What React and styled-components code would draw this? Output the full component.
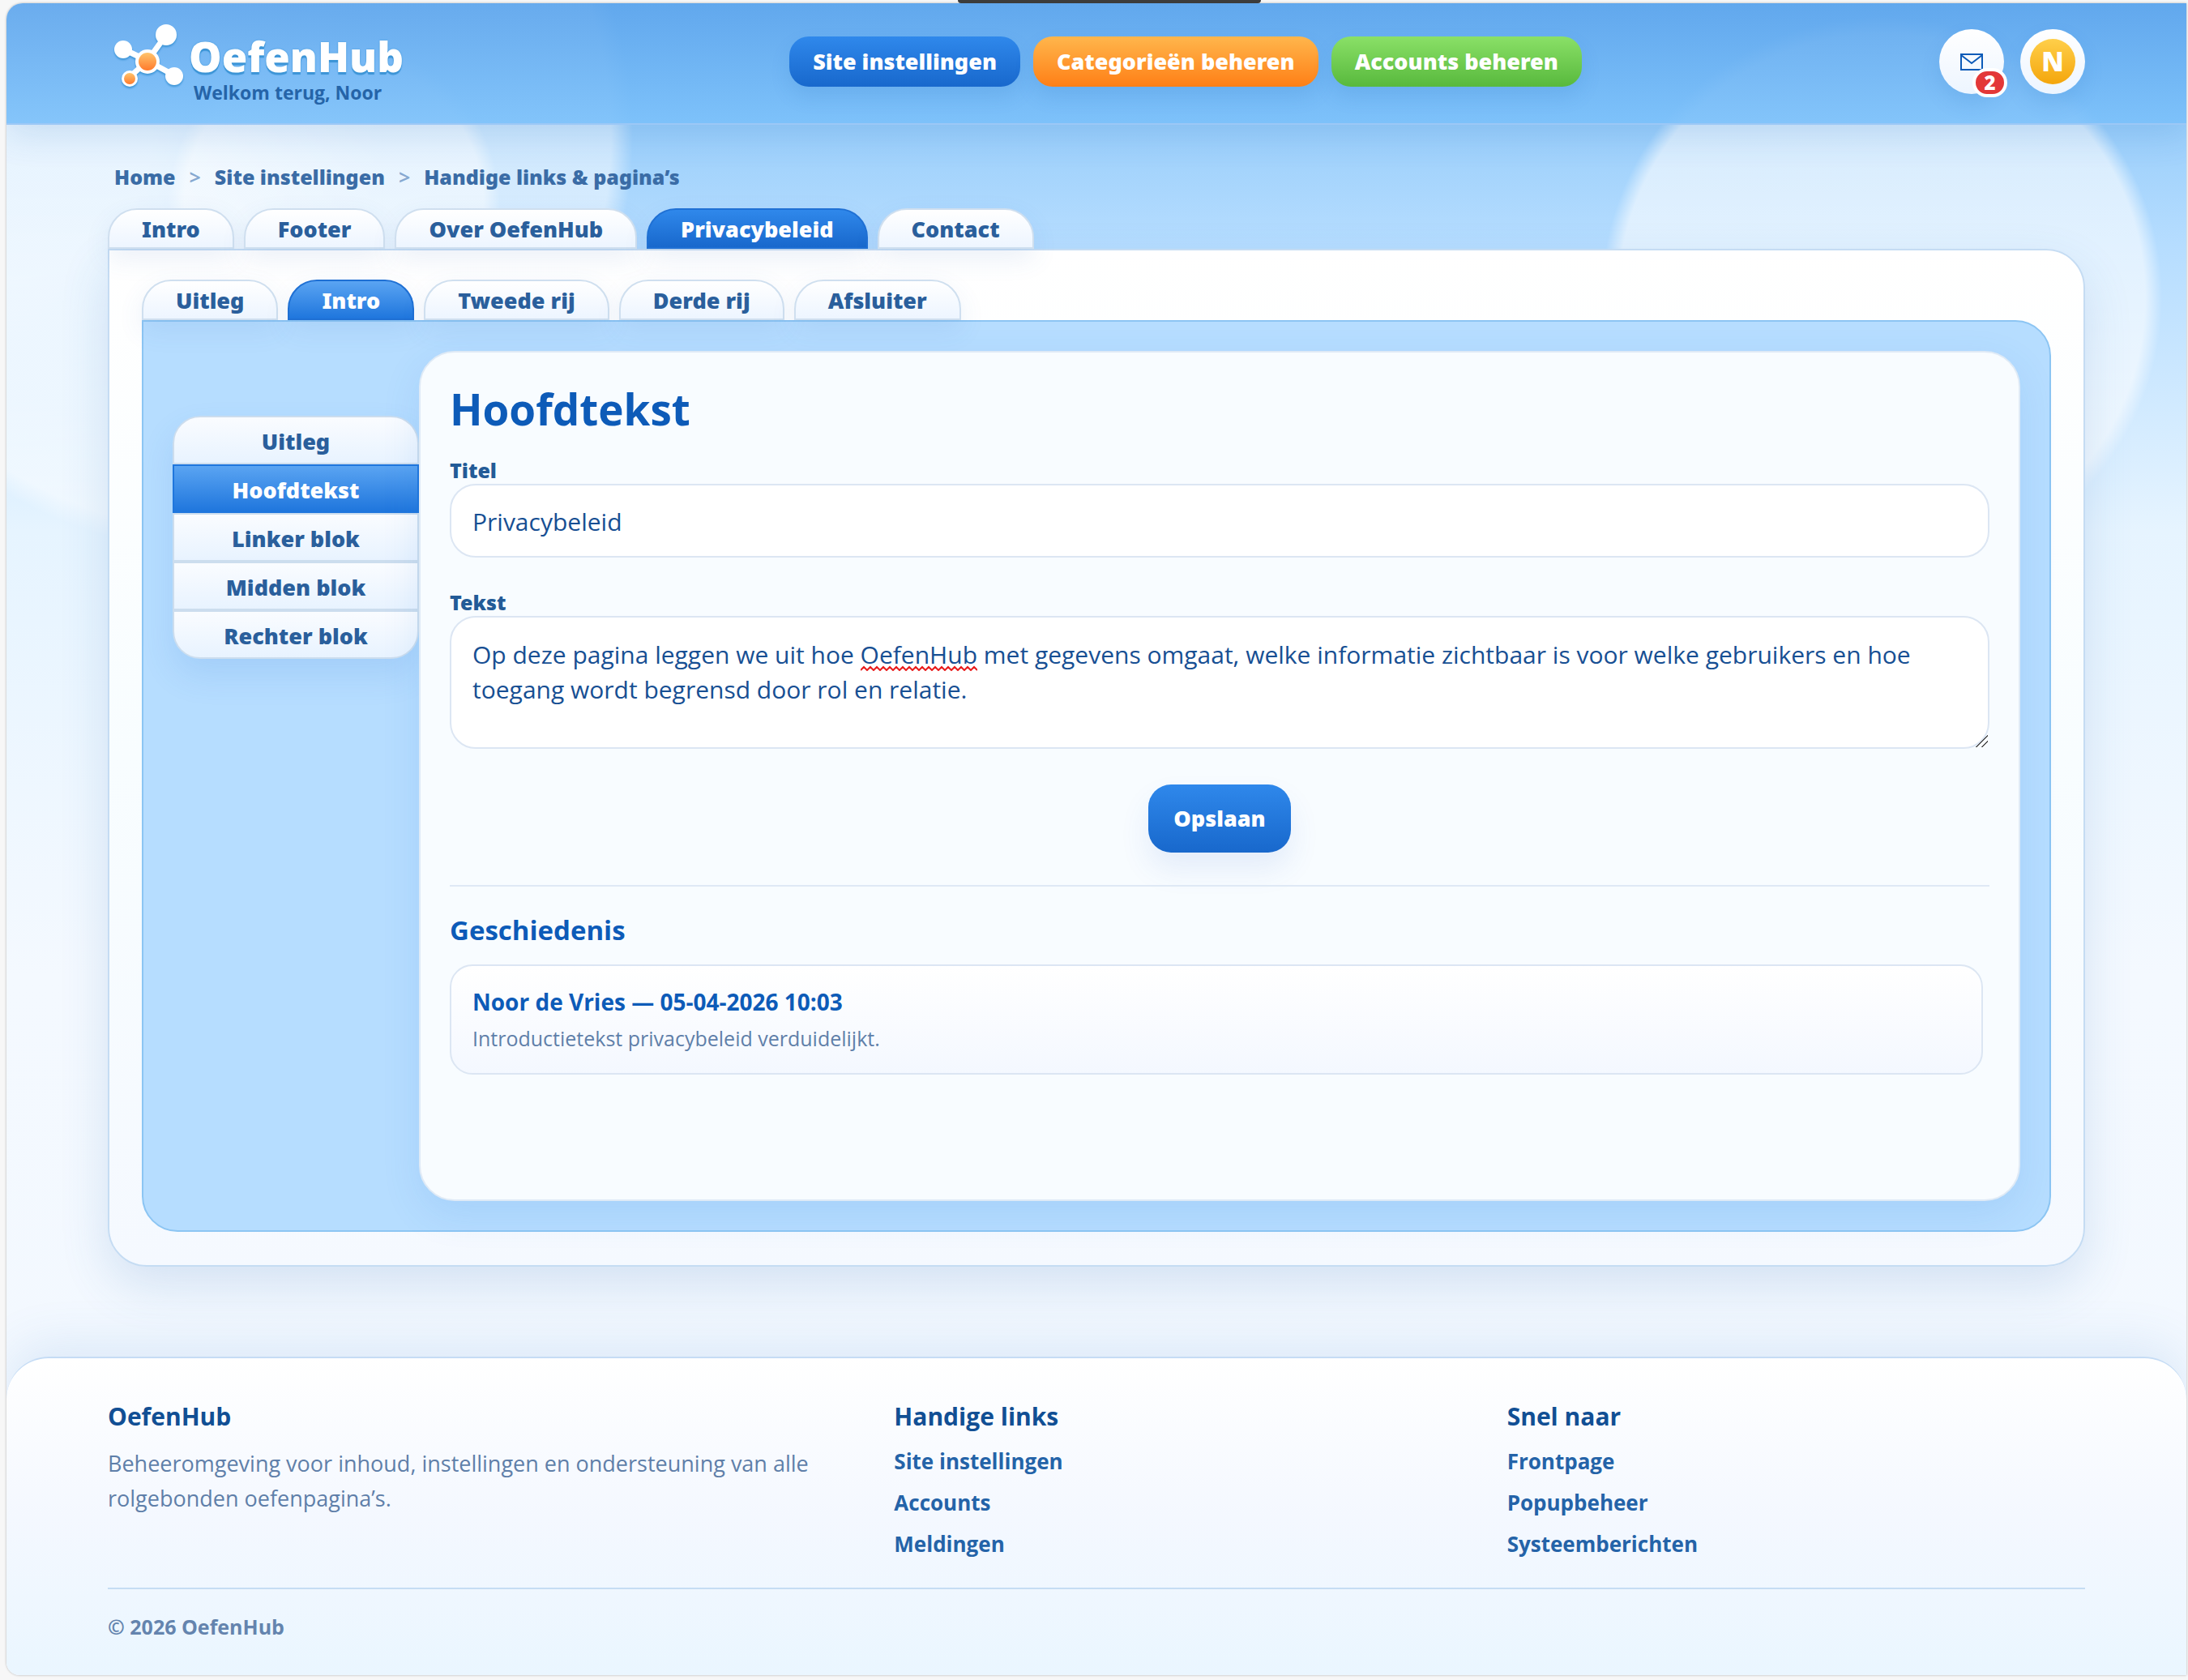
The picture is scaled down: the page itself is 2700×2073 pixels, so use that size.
import React from 'react';
import styled, { createGlobalStyle } from 'styled-components';

const GlobalStyle = createGlobalStyle`
  :root {
    --black-font: 'Noto Sans', 'Open Sans', sans-serif;
  }
  * {
    box-sizing: border-box;
  }
  body {
    margin: 0;
    padding: 4px 2px 7px 8px;
    background: #f7f7f7;
    font-family: 'Open Sans', 'Noto Sans', sans-serif;
    color: #174f93;
  }
  h1, h2, h3, p {
    margin: 0;
  }
  a {
    color: inherit;
    text-decoration: none;
  }
  button, input, textarea {
    font-family: inherit;
  }
`;

const Notch = styled.div`
  position: absolute;
  top: 0;
  left: 50%;
  width: 374px;
  height: 4px;
  margin-left: -168px;
  border-radius: 0 0 8px 8px;
  background: #3c3c3c;
`;
const Page = styled.div`
  border-radius: 20px 0 0 16px;
  overflow: hidden;
  box-shadow: 0 0 3px rgba(0, 0, 0, 0.3);
  background:
    radial-gradient(circle at 404px 250px, rgba(255, 255, 255, 0.5) 0 185px, transparent 205px),
    radial-gradient(circle at 261px 165px, rgba(255, 255, 255, 0.5) 0 485px, transparent 512px),
    radial-gradient(circle at 0 160px, rgba(255, 255, 255, 0.5) 0 180px, transparent 460px),
    radial-gradient(circle at calc(100% - 376px) 363px, rgba(255, 255, 255, 0.6) 0 325px, transparent 346px),
    linear-gradient(180deg, #7fc0f6 0, #b6ddff 300px, #e6f4ff 650px, #f4f9ff 1200px, #f2f8ff 100%);
`;
const Header = styled.header`
  display: flex;
  justify-content: space-between;
  align-items: center;
  height: 150px;
  padding: 0 125px 4px;
  border-bottom: 2px solid #9cc8f6;
  background: linear-gradient(180deg, rgba(94, 165, 236, 0.9), rgba(122, 192, 250, 0.9));
  box-shadow: 0 12px 40px rgba(40, 110, 190, 0.16);
`;
const Brand = styled.a`
  display: flex;
  gap: 5px;
  min-width: 400px;
  padding-left: 7px;
`;
const LogoMark = styled.svg`
  width: 88px;
  height: 88px;
  filter: drop-shadow(0 2px 1px #3b94d6);
`;
const BrandName = styled.div`
  padding-top: 13px;
  font-size: 51px;
  line-height: 62px;
  font-weight: 800;
  color: #fff;
  text-shadow: 0 3px 1px #3b94d6, 0 0 2px #3b94d6;
`;
const Welcome = styled.div`
  padding-left: 6px;
  font-size: 23px;
  line-height: 28px;
  font-weight: 700;
  color: #2564a8;
`;
const Nav = styled.nav`
  display: flex;
  gap: 16px;
`;
const navColors = {
  blue: 'linear-gradient(180deg, #2f88eb, #1868cc)',
  orange: 'linear-gradient(180deg, #ffb64c, #ff7f16)',
  green: 'linear-gradient(180deg, #8ae067, #58b93d)',
};
const NavLink = styled.a`
  padding: 0 29px;
  border-radius: 24px;
  font-family: var(--black-font);
  font-size: 27px;
  line-height: 62px;
  font-weight: 900;
  color: #fff;
  background: ${({ $color }) => navColors[$color]};
  box-shadow: 0 12px 24px rgba(40, 110, 190, 0.14);
`;
const Actions = styled.div`
  display: flex;
  justify-content: flex-end;
  gap: 20px;
`;
const RoundButton = styled.button`
  position: relative;
  display: flex;
  align-items: center;
  justify-content: center;
  width: 80px;
  height: 80px;
  padding: 0;
  border: 0;
  border-radius: 50%;
  background: linear-gradient(180deg, #fff, #edf5ff);
  box-shadow: 0 12px 24px rgba(40, 110, 190, 0.14);
`;
const Badge = styled.span`
  position: absolute;
  right: -4px;
  bottom: -4px;
  min-width: 43px;
  border: 4px solid #fff;
  border-radius: 18px;
  background: #e33838;
  color: #fff;
  font-family: var(--black-font);
  font-size: 24px;
  line-height: 28px;
  font-weight: 900;
  text-align: center;
`;
const Avatar = styled.span`
  width: 56px;
  border-radius: 50%;
  background: linear-gradient(180deg, #ffcf4a, #f4a60c);
  color: #fff;
  font-family: var(--black-font);
  font-size: 33px;
  line-height: 56px;
  font-weight: 900;
`;
const Main = styled.main`
  padding: 46px 125px 111px;
`;
const Breadcrumb = styled.nav`
  display: flex;
  gap: 17px;
  padding-left: 8px;
  margin-bottom: 21px;
  font-family: var(--black-font);
  font-size: 25px;
  line-height: 36px;
  font-weight: 900;
  color: #3a6ca6;
`;
const Separator = styled.span`
  font-weight: 600;
  color: #86a8d0;
`;
const Tabs = styled.div`
  display: flex;
  gap: 12px;
`;
const activeTabs = {
  main: 'linear-gradient(180deg, #2f88eb, #1868cc)',
  sub: 'linear-gradient(180deg, #5aa4f2, #1f76dd)',
};
const Tab = styled.button`
  height: 50px;
  padding: 2px 40px 0;
  border: 2px solid ${({ $active }) => ($active ? '#1f70d4' : '#cfdfef')};
  border-radius: 36px 36px 0 0;
  background: ${({ $active, $kind }) =>
    $active ? activeTabs[$kind] : 'linear-gradient(180deg, #fff, #edf5ff)'};
  color: ${({ $active }) => ($active ? '#fff' : '#2a5f9c')};
  font-family: var(--black-font);
  font-size: 27px;
  line-height: 44px;
  font-weight: 900;
  box-shadow: 0 12px 32px rgba(60, 110, 190, 0.1);
`;
const Panel = styled.section`
  padding: 36px 40px 41px;
  border: 2px solid #c5dcf3;
  border-radius: 0 48px 48px 48px;
  background: linear-gradient(180deg, #fff, #f8fdff 50%, #f5f9ff);
  box-shadow: 0 24px 60px rgba(50, 110, 180, 0.16);
`;
const BluePanel = styled.div`
  display: flex;
  padding: 36px;
  border: 2px solid #8cc5f3;
  border-radius: 0 44px 44px 44px;
  background: #b6ddff;
`;
const SideNav = styled.div`
  display: flex;
  flex-direction: column;
  align-self: flex-start;
  width: 304px;
  margin-top: 80px;
  border-radius: 34px;
  overflow: hidden;
  box-shadow: 0 20px 40px rgba(50, 120, 210, 0.14);
`;
const SideButton = styled.button`
  height: 60px;
  padding: 2px 0 0;
  border: 2px solid ${({ $active }) => ($active ? '#1f76dd' : '#ccddee')};
  background: ${({ $active }) =>
    $active ? 'linear-gradient(180deg, #5aa4f2, #1f76dd)' : 'linear-gradient(180deg, #fafcff, #e8f3ff)'};
  color: ${({ $active }) => ($active ? '#fff' : '#2a5f9c')};
  font-family: var(--black-font);
  font-size: 27px;
  font-weight: 900;
  &:first-child {
    border-radius: 34px 34px 0 0;
  }
  &:last-child {
    border-radius: 0 0 34px 34px;
  }
`;
const Card = styled.div`
  flex: 1;
  min-height: 1049px;
  padding: 34px 36px;
  border: 2px solid #dfeaf6;
  border-radius: 44px;
  background: #f8fcff;
  box-shadow: 0 16px 48px rgba(50, 120, 210, 0.12);
`;
const Title = styled.h1`
  font-size: 53px;
  line-height: 72px;
  font-weight: 700;
  color: #0d5bb8;
`;
const Field = styled.div`
  position: relative;
  display: flex;
  flex-direction: column;
  margin-top: 22px;
  & + & {
    margin-top: 38px;
  }
`;
const Label = styled.label`
  font-family: var(--black-font);
  font-size: 25px;
  line-height: 34px;
  font-weight: 900;
  color: #235b97;
`;
const Input = styled.input`
  height: 91px;
  padding: 2px 26px 0;
  border: 2px solid #dce6f3;
  border-radius: 32px;
  background: #fff;
  color: #174f93;
  font-size: 30px;
`;
const TextArea = styled.textarea`
  height: 164px;
  padding: 24px 26px;
  border: 2px solid #dce6f3;
  border-radius: 32px;
  background: #fff;
  color: #174f93;
  font-size: 30px;
  line-height: 43px;
  resize: vertical;
  &::-webkit-resizer {
    background: linear-gradient(
      135deg,
      transparent 0 48%,
      #555 48% 55%,
      transparent 55% 72%,
      #555 72% 79%,
      transparent 79%
    );
  }
`;
const Squiggle = styled.svg`
  position: absolute;
  left: 507px;
  top: 95px;
  width: 144px;
  height: 7px;
  pointer-events: none;
`;
const SaveButton = styled.button`
  display: block;
  margin: 44px auto 40px;
  padding: 0 31px;
  border: 0;
  border-radius: 28px;
  background: ${navColors.blue};
  color: #fff;
  font-family: var(--black-font);
  font-size: 27px;
  line-height: 84px;
  font-weight: 900;
  box-shadow: 0 20px 36px rgba(50, 100, 210, 0.1);
`;
const History = styled.section`
  padding-top: 29px;
  border-top: 2px solid #dfe9f5;
`;
const HistoryTitle = styled.h2`
  font-size: 33px;
  line-height: 50px;
  font-weight: 700;
  color: #0d5bb8;
`;
const HistoryItem = styled.article`
  margin: 17px 8px 0 0;
  padding: 22px 26px 21px;
  border: 2px solid #dce6f3;
  border-radius: 28px;
  background: linear-gradient(180deg, #fff, #f4f8ff);
`;
const HistoryName = styled.h3`
  font-size: 28px;
  line-height: 44px;
  font-weight: 700;
  color: #0d5bb8;
`;
const HistoryText = styled.p`
  padding-top: 2px;
  font-size: 25px;
  line-height: 43px;
  color: #5f7fa9;
`;
const FooterComponent = styled.footer`
  padding: 50px 125px 38px;
  border-top: 2px solid #c5dcf5;
  border-radius: 52px 52px 0 0;
  background: linear-gradient(180deg, #fff, #f4f8ff 50%, #eaf6ff);
  box-shadow: 0 -16px 60px rgba(60, 120, 200, 0.12);
`;
const FooterGrid = styled.div`
  display: grid;
  grid-template-columns: 13fr 10fr 10fr;
  column-gap: 43px;
  padding-bottom: 28px;
  border-bottom: 2px solid #c5ddf3;
`;
const FooterColumn = styled.div`
  display: flex;
  flex-direction: column;
  align-items: flex-start;
`;
const FooterTitle = styled.h3`
  margin-bottom: 8px;
  font-size: 30px;
  line-height: 44px;
  font-weight: 700;
  color: #114f94;
`;
const FooterText = styled.p`
  max-width: 880px;
  padding-top: 6px;
  font-size: 27px;
  line-height: 43px;
  color: #5f7fa9;
`;
const FooterLink = styled.a`
  font-size: 26px;
  line-height: 51px;
  font-weight: 700;
  color: #2463a8;
`;
const Copyright = styled.p`
  padding-top: 24px;
  font-size: 25px;
  line-height: 44px;
  font-weight: 700;
  color: #6484ae;
`;

const tabs = ['Intro', 'Footer', 'Over OefenHub', 'Privacybeleid', 'Contact'];
const subTabs = ['Uitleg', 'Intro', 'Tweede rij', 'Derde rij', 'Afsluiter'];
const blocks = ['Uitleg', 'Hoofdtekst', 'Linker blok', 'Midden blok', 'Rechter blok'];

const Logo = () => (
  <LogoMark viewBox="0 -3 88 88" aria-hidden="true">
    <defs>
      <linearGradient id="orange" x1="0" y1="0" x2="0" y2="1">
        <stop offset="0" stopColor="#ffc46c" />
        <stop offset="1" stopColor="#ff7a2c" />
      </linearGradient>
    </defs>
    <path d="M65 15 42 47 11 32M42 47 75 65M42 47 19 68" fill="none" stroke="#fff" strokeWidth="7" />
    <g fill="#fff">
      <circle cx="65" cy="15" r="13" />
      <circle cx="12" cy="33" r="11" />
      <circle cx="42" cy="48" r="15" />
      <circle cx="75" cy="66" r="11" />
      <circle cx="20" cy="69" r="10" />
    </g>
    <circle cx="42" cy="48" r="11" fill="url(#orange)" />
    <circle cx="20" cy="69" r="7" fill="url(#orange)" />
  </LogoMark>
);

const App = () => {
  return (
    <>
      <GlobalStyle />
      <Notch />
      <Page>
        <Header>
          <Brand href="/">
            <Logo />
            <div>
              <BrandName>OefenHub</BrandName>
              <Welcome>Welkom terug, Noor</Welcome>
            </div>
          </Brand>
          <Nav>
            <NavLink href="#site" $color="blue">Site instellingen</NavLink>
            <NavLink href="#categorieen" $color="orange">Categorieën beheren</NavLink>
            <NavLink href="#accounts" $color="green">Accounts beheren</NavLink>
          </Nav>
          <Actions>
            <RoundButton type="button" aria-label="Berichten">
              <svg width="28" height="22" viewBox="0 0 28 22" fill="none" stroke="#0d5bb8" strokeWidth="2">
                <path d="M1 2h26v19H1zM1 3l13 10L27 3" />
              </svg>
              <Badge>2</Badge>
            </RoundButton>
            <RoundButton type="button">
              <Avatar>N</Avatar>
            </RoundButton>
          </Actions>
        </Header>
        <Main>
          <Breadcrumb>
            <a href="/">Home</a>
            <Separator>&gt;</Separator>
            <a href="#site">Site instellingen</a>
            <Separator>&gt;</Separator>
            <a href="#links">Handige links &amp; pagina’s</a>
          </Breadcrumb>
          <Tabs>
            {tabs.map((tab) => (
              <Tab key={tab} type="button" $kind="main" $active={tab === 'Privacybeleid'}>
                {tab}
              </Tab>
            ))}
          </Tabs>
          <Panel>
            <Tabs>
              {subTabs.map((tab) => (
                <Tab key={tab} type="button" $kind="sub" $active={tab === 'Intro'}>
                  {tab}
                </Tab>
              ))}
            </Tabs>
            <BluePanel>
              <SideNav>
                {blocks.map((block) => (
                  <SideButton key={block} type="button" $active={block === 'Hoofdtekst'}>
                    {block}
                  </SideButton>
                ))}
              </SideNav>
              <Card>
                <Title>Hoofdtekst</Title>
                <Field>
                  <Label htmlFor="titel">Titel</Label>
                  <Input id="titel" type="text" defaultValue="Privacybeleid" />
                </Field>
                <Field>
                  <Label htmlFor="tekst">Tekst</Label>
                  <TextArea
                    id="tekst"
                    spellCheck={false}
                    defaultValue="Op deze pagina leggen we uit hoe OefenHub met gegevens omgaat, welke informatie zichtbaar is voor welke gebruikers en hoe toegang wordt begrensd door rol en relatie."
                  />
                  <Squiggle viewBox="0 0 144 7" aria-hidden="true">
                    <path
                      d={`M0 6${'l4 -4l4 4'.repeat(18)}`}
                      fill="none"
                      stroke="#e81c1c"
                      strokeWidth="2"
                    />
                  </Squiggle>
                </Field>
                <SaveButton type="button">Opslaan</SaveButton>
                <History>
                  <HistoryTitle>Geschiedenis</HistoryTitle>
                  <HistoryItem>
                    <HistoryName>Noor de Vries — 05-04-2026 10:03</HistoryName>
                    <HistoryText>Introductietekst privacybeleid verduidelijkt.</HistoryText>
                  </HistoryItem>
                </History>
              </Card>
            </BluePanel>
          </Panel>
        </Main>
        <FooterComponent>
          <FooterGrid>
            <FooterColumn>
              <FooterTitle>OefenHub</FooterTitle>
              <FooterText>
                Beheeromgeving voor inhoud, instellingen en ondersteuning van alle rolgebonden oefenpagina’s.
              </FooterText>
            </FooterColumn>
            <FooterColumn>
              <FooterTitle>Handige links</FooterTitle>
              <FooterLink href="#site">Site instellingen</FooterLink>
              <FooterLink href="#accounts">Accounts</FooterLink>
              <FooterLink href="#meldingen">Meldingen</FooterLink>
            </FooterColumn>
            <FooterColumn>
              <FooterTitle>Snel naar</FooterTitle>
              <FooterLink href="#frontpage">Frontpage</FooterLink>
              <FooterLink href="#popupbeheer">Popupbeheer</FooterLink>
              <FooterLink href="#systeemberichten">Systeemberichten</FooterLink>
            </FooterColumn>
          </FooterGrid>
          <Copyright>© 2026 OefenHub</Copyright>
        </FooterComponent>
      </Page>
    </>
  );
};

export default App;
